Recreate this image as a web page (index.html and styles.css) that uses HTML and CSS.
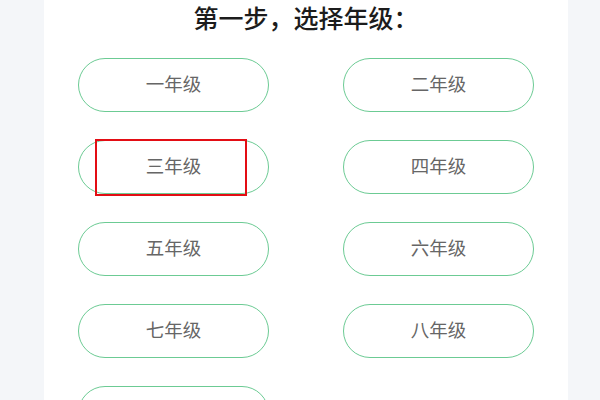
FILE: index.html
```html
<!DOCTYPE html>
<html lang="zh">
<head>
<meta charset="utf-8">
<link rel="stylesheet" href="styles.css">
</head>
<body>
<div class="page">
  <div class="panel">
    <h1 class="title">第一步，选择年级：</h1>
    <div class="grades">
      <div class="grade">一年级</div>
      <div class="grade">二年级</div>
      <div class="grade marked">三年级<span class="highlight"></span></div>
      <div class="grade">四年级</div>
      <div class="grade">五年级</div>
      <div class="grade">六年级</div>
      <div class="grade">七年级</div>
      <div class="grade">八年级</div>
      <div class="grade">九年级</div>
    </div>
  </div>
</div>
</body>
</html>
```

FILE: styles.css
```css
html, body {
  margin: 0;
  padding: 0;
  height: 100%;
  overflow: hidden;
  background: #f4f6f9;
  font-family: "Noto Sans CJK SC", "Noto Sans", sans-serif;
}
.page {
  display: flex;
  justify-content: flex-start;
  padding-left: 44px;
  height: 100%;
}
.panel {
  width: 524px;
  background: #ffffff;
  height: 100%;
  box-sizing: border-box;
}
.title {
  margin: 0;
  text-align: center;
  font-size: 25px;
  font-weight: 500;
  line-height: 34px;
  color: #1c1c1c;
}
.grades {
  margin-top: 24px;
  padding: 0 34px;
  display: grid;
  grid-template-columns: 191px 191px;
  justify-content: space-between;
  grid-auto-rows: 54px;
  row-gap: 28px;
}
.grade {
  position: relative;
  border: 1px solid #6ccb94;
  border-radius: 27px;
  display: flex;
  align-items: center;
  justify-content: center;
  padding-bottom: 4px;
  font-size: 18.5px;
  color: #666666;
  box-sizing: border-box;
}
.highlight {
  position: absolute;
  left: 16px;
  top: -2px;
  width: 152px;
  height: 57px;
  border: 2.5px solid #e30d14;
  box-sizing: border-box;
}
```
